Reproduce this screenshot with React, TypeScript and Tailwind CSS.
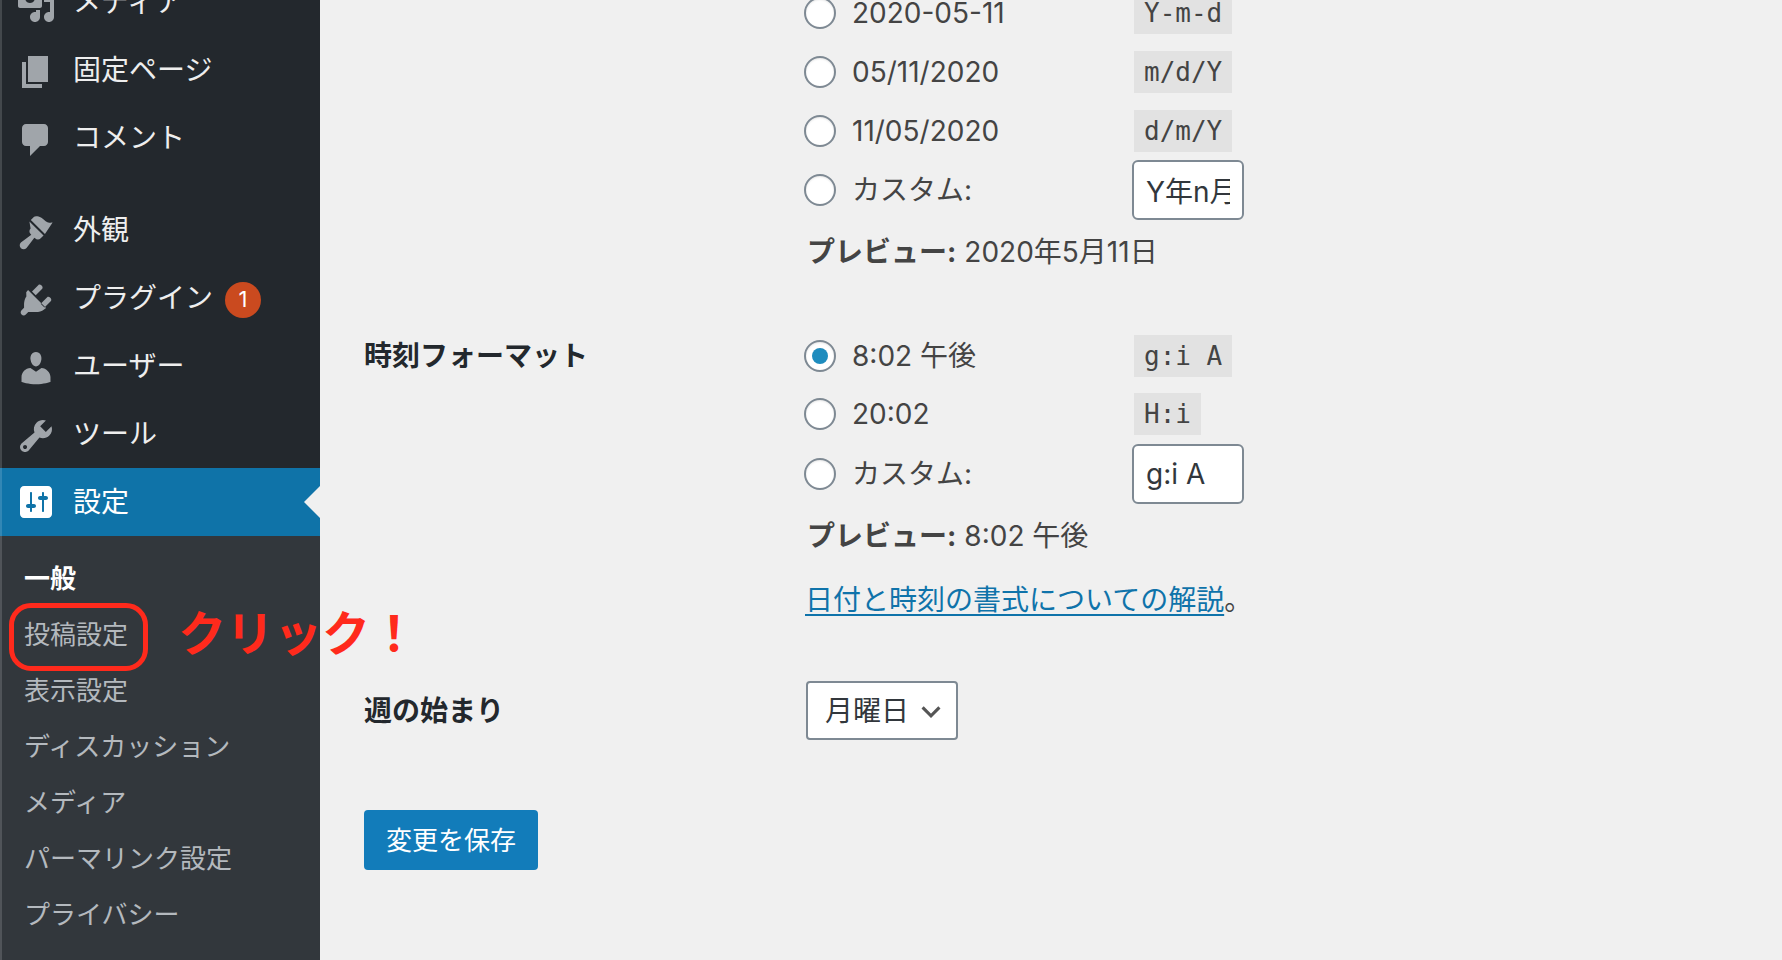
import React from "react";

const font = { fontFamily: '"Inter", "Noto Sans CJK JP", sans-serif' };

const icons: Record<string, string> = {
  media:
    "M13 11V4c0-.55-.45-1-1-1h-1.67L9 1H5L3.67 3H2c-.55 0-1 .45-1 1v7c0 .55.45 1 1 1h10c.55 0 1-.45 1-1zM7 4.5c1.38 0 2.5 1.12 2.5 2.5S8.38 9.5 7 9.5 4.5 8.38 4.5 7 5.62 4.5 7 4.5zM14 6h5v10.5c0 1.38-1.12 2.5-2.5 2.5S14 17.88 14 16.5s1.12-2.5 2.5-2.5c.17 0 .34.02.5.05V9h-3V6zm-4 8.05V13h2v3.5c0 1.38-1.12 2.5-2.5 2.5S7 17.88 7 16.5 8.12 14 9.5 14c.17 0 .34.02.5.05z",
  page: "M6 15V2h10v13H6zm-1 1h8v2H3V5h2v11z",
  comment:
    "M5 2h9c1.1 0 2 .9 2 2v7c0 1.1-.9 2-2 2h-2l-5 5v-5H5c-1.1 0-2-.9-2-2V4c0-1.1.9-2 2-2z",
  brush:
    "M14.48 11.06L7.41 3.99l1.5-1.5c.5-.56 2.3-.47 3.59.32 1.29.8 1.96 1.9 3.2 2.3 1.1.35 1.9.3 2.6.2l-3.82 5.75zM6.7 4.7l7.07 7.07-1.41 1.41c-.78.78-2.05.78-2.83 0l-.35-.35-3.9 5.2c-.78.78-2.05.78-2.83.1-.78-.78-.78-2.05 0-2.83l5.2-3.9-.35-.35c-.78-.78-.78-2.05 0-2.83L6.7 4.7z",
  plugin:
    "M13.11 4.36L9.87 7.6 8 5.73l3.24-3.24c.35-.34 1.05-.2 1.56.32.52.51.66 1.21.31 1.55zm-8 1.77l.91-1.12 9.01 9.01-1.19.84c-.71.71-2.63 1.16-3.82 1.16H6.14L4.9 17.26c-.59.59-1.54.59-2.12 0-.59-.58-.59-1.53 0-2.12l1.24-1.24v-1.89c0-1.19.45-3.11 1.16-3.82zm12.36 4.36l-3.24 3.24-1.87-1.87 3.24-3.24c.34-.35 1.04-.21 1.55.31.52.51.66 1.21.32 1.56z",
  users:
    "M10 9.25c-2.27 0-2.73-3.44-2.73-3.44C7 4.02 7.82 2 9.97 2c2.16 0 2.98 2.02 2.71 3.81 0 0-.41 3.44-2.68 3.44zm0 2.57L12.72 10c2.39 0 4.52 2.33 4.52 4.53v2.49s-3.65 1.13-7.24 1.13c-3.65 0-7.24-1.13-7.24-1.13v-2.49c0-2.25 1.94-4.48 4.47-4.48z",
  tools:
    "M16.68 9.77c-1.34 1.34-3.3 1.67-4.95.99l-5.41 6.52c-.99.99-2.59.99-3.58 0s-.99-2.59 0-3.57l6.52-5.42c-.68-1.65-.35-3.61.99-4.95 1.28-1.28 3.12-1.62 4.72-1.06l-2.89 2.89 2.82 2.82 2.86-2.87c.53 1.58.18 3.39-1.08 4.67zM3.81 16.21c.4.39 1.04.39 1.43 0 .4-.4.4-1.04 0-1.43-.39-.4-1.03-.4-1.43 0-.39.39-.39 1.03 0 1.43z",
  settings:
    "M18 16V4c0-1.1-.9-2-2-2H4c-1.1 0-2 .9-2 2v12c0 1.1.9 2 2 2h12c1.1 0 2-.9 2-2zM8 11h1c.55 0 1 .45 1 1s-.45 1-1 1H8v1.5c0 .28-.22.5-.5.5s-.5-.22-.5-.5V13H6c-.55 0-1-.45-1-1s.45-1 1-1h1V5.5c0-.28.22-.5.5-.5s.5.22.5.5V11zm5-2h-1c-.55 0-1-.45-1-1s.45-1 1-1h1V5.5c0-.28.22-.5.5-.5s.5.22.5.5V7h1c.55 0 1 .45 1 1s-.45 1-1 1h-1v5.5c0 .28-.22.5-.5.5s-.5-.22-.5-.5V9z",
};

function Dash({ name, className }: { name: string; className: string }) {
  return (
    <svg viewBox="0 0 20 20" className={className} fill="currentColor">
      <path d={icons[name]} fillRule="evenodd" clipRule="evenodd" />
    </svg>
  );
}

function MenuRow({ icon, label, badge }: { icon: string; label: string; badge?: string }) {
  return (
    <div className="flex h-[68px] items-center border-l-2 border-white/15 bg-[#23282d] pl-[14px]">
      <Dash name={icon} className="mt-[4px] h-[40px] w-[40px] shrink-0 text-[#a0a5aa]" />
      <span className="ml-[17px] whitespace-nowrap text-[28px] leading-none text-[#eeeeee]">{label}</span>
      {badge && (
        <span className="ml-[12px] mt-[3px] flex h-[36px] w-[36px] items-center justify-center rounded-full bg-[#ca4a1f] text-[22px] text-white">
          {badge}
        </span>
      )}
    </div>
  );
}

function SubRow({ label, bold }: { label: string; bold?: boolean }) {
  return (
    <div
      className={
        bold
          ? "flex h-[56px] items-center whitespace-nowrap pl-[22px] text-[26px] font-bold text-white"
          : "flex h-[56px] items-center whitespace-nowrap pl-[22px] text-[26px] text-[#b4b9be]"
      }
    >
      {label}
    </div>
  );
}

function Radio({ checked }: { checked?: boolean }) {
  return (
    <span className="flex h-[32px] w-[32px] shrink-0 items-center justify-center rounded-full border-2 border-[#7e8993] bg-white shadow-[inset_0_1px_2px_rgba(0,0,0,0.1)]">
      {checked && <span className="h-[16px] w-[16px] rounded-full bg-[#1e8cbe]" />}
    </span>
  );
}

function Code({ children }: { children: string }) {
  return (
    <code
      className="flex h-[42px] items-center whitespace-pre bg-[#e2e2e2] px-[10px] text-[26px] text-[#444444]"
      style={{ fontFamily: '"DejaVu Sans Mono", monospace' }}
    >
      {children}
    </code>
  );
}

function Choice({
  h,
  label,
  code,
  checked,
}: {
  h: string;
  label: string;
  code: string;
  checked?: boolean;
}) {
  return (
    <div className={`flex items-center ${h}`}>
      <Radio checked={checked} />
      <span className="ml-[16px] w-[282px] whitespace-nowrap text-[28px] text-[#444444]">{label}</span>
      <Code>{code}</Code>
    </div>
  );
}

function Custom({ h, value }: { h: string; value: string }) {
  return (
    <div className={`flex items-center ${h}`}>
      <Radio />
      <span className="ml-[16px] w-[280px] whitespace-nowrap text-[28px] text-[#444444]">カスタム:</span>
      <input
        readOnly
        value={value}
        className="h-[60px] w-[112px] rounded-[6px] border-2 border-[#7e8993] bg-white px-[12px] text-[28px] text-[#32373c] outline-none"
        style={font}
      />
    </div>
  );
}

function Preview({ h, value }: { h: string; value: string }) {
  return (
    <div className={`flex items-center whitespace-nowrap pl-[3px] text-[28px] text-[#444444] ${h}`}>
      <b className="font-bold">プレビュー:</b>
      <span className="ml-[8px]">{value}</span>
    </div>
  );
}

export default function App() {
  return (
    <div className="relative flex h-[960px] w-[1782px] overflow-hidden bg-[#f0f0f0]" style={font}>
      <aside className="flex h-[960px] w-[320px] shrink-0 flex-col bg-[#23282d]">
        <div className="-mt-[32px]">
          <MenuRow icon="media" label="メディア" />
          <MenuRow icon="page" label="固定ページ" />
          <MenuRow icon="comment" label="コメント" />
          <div className="h-[24px] border-l-2 border-white/15" />
          <MenuRow icon="brush" label="外観" />
          <MenuRow icon="plugin" label="プラグイン" badge="1" />
          <MenuRow icon="users" label="ユーザー" />
          <MenuRow icon="tools" label="ツール" />
          <div className="relative flex h-[68px] items-center border-l-2 border-white/15 bg-[#0f73a8] pl-[14px]">
            <Dash name="settings" className="h-[40px] w-[40px] shrink-0 text-white" />
            <span className="ml-[17px] text-[28px] leading-none text-white">設定</span>
            <span className="absolute right-0 top-[18px] h-0 w-0 border-y-[16px] border-r-[16px] border-y-transparent border-r-[#f0f0f0]" />
          </div>
        </div>
        <div className="flex-1 border-l-2 border-white/15 bg-[#32373c] pt-[14px]">
          <SubRow label="一般" bold />
          <SubRow label="投稿設定" />
          <SubRow label="表示設定" />
          <SubRow label="ディスカッション" />
          <SubRow label="メディア" />
          <SubRow label="パーマリンク設定" />
          <SubRow label="プライバシー" />
        </div>
      </aside>

      <main className="flex-1 pl-[44px]">
        <div className="-mt-[16px] ml-[440px]">
          <Choice h="h-[58px]" label="2020-05-11" code="Y-m-d" />
          <Choice h="h-[60px]" label="05/11/2020" code="m/d/Y" />
          <Choice h="h-[58px]" label="11/05/2020" code="d/m/Y" />
          <Custom h="h-[60px]" value="Y年n月" />
          <Preview h="h-[64px]" value="2020年5月11日" />
        </div>

        <div className="mt-[43px] flex">
          <div className="flex h-[58px] w-[440px] shrink-0 items-center text-[28px] font-bold text-[#23282d]">
            時刻フォーマット
          </div>
          <div>
            <Choice h="h-[58px]" label="8:02 午後" code="g:i A" checked />
            <Choice h="h-[58px]" label="20:02" code="H:i" />
            <Custom h="h-[61px]" value="g:i A" />
            <Preview h="h-[64px]" value="8:02 午後" />
            <div className="flex h-[64px] items-center whitespace-nowrap pl-[1px] text-[28px] text-[#444444]">
              <a className="text-[#0f73aa] underline underline-offset-[4px]">日付と時刻の書式についての解説</a>
              <span>。</span>
            </div>
          </div>
        </div>

        <div className="mt-[49px] flex items-center">
          <div className="w-[442px] shrink-0 text-[28px] font-bold text-[#23282d]">週の始まり</div>
          <div className="flex h-[59px] w-[152px] items-center rounded-[4px] border-2 border-[#7e8993] bg-white pl-[17px] text-[28px] text-[#32373c]">
            月曜日
            <svg viewBox="0 0 20 20" className="ml-[10px] h-[24px] w-[24px] text-[#555555]" fill="none" stroke="currentColor" strokeWidth="2.6">
              <path d="M3 7l7 7 7-7" />
            </svg>
          </div>
        </div>

        <button className="mt-[70px] flex h-[60px] w-[174px] items-center justify-center rounded-[4px] bg-[#127cba] text-[26px] text-white">
          変更を保存
        </button>
      </main>

      <div className="absolute left-[9px] top-[603px] h-[68px] w-[139px] rounded-[22px] border-[5px] border-[#ff2a1c]" />
      <div className="absolute left-[178px] top-[604px] whitespace-nowrap text-[48px] font-bold leading-[60px] text-[#ff2a1c]">
        クリック！
      </div>
    </div>
  );
}
